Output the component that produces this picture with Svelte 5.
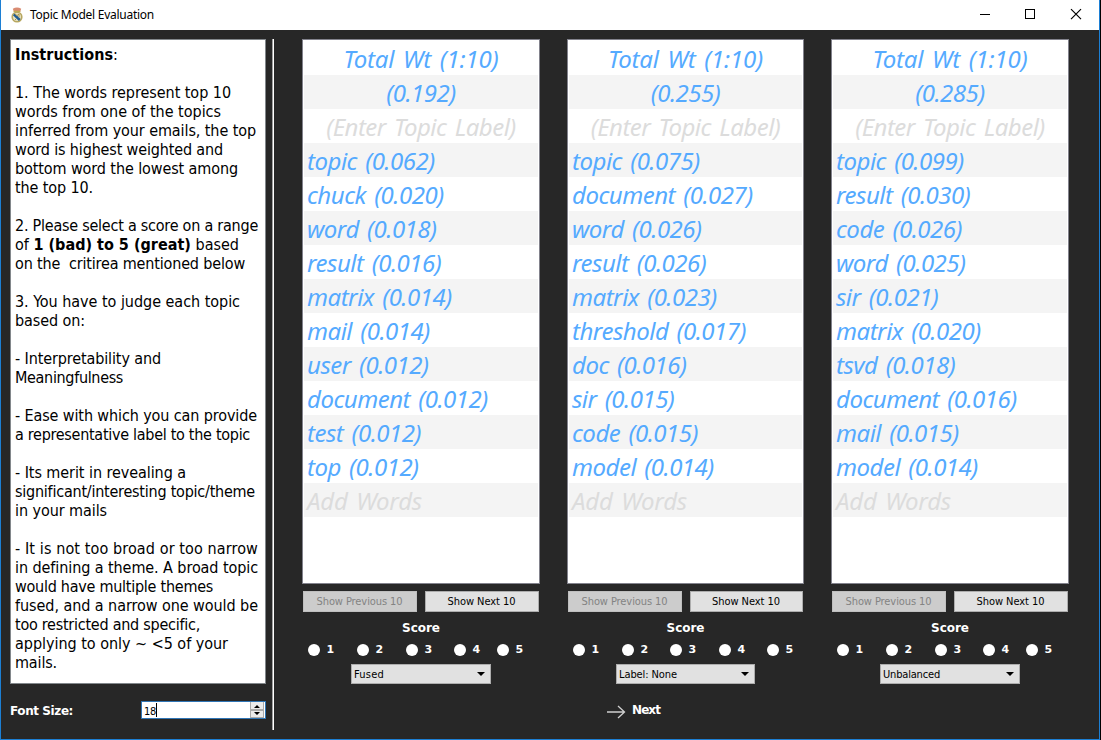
<script>
  // Spreads a line of text over the width it is given.
  function fit(node, width) {
    node.style.letterSpacing = '0px';
    const natural = node.getBoundingClientRect().width;
    const count = node.textContent.length;
    node.style.letterSpacing = `${(width - natural) / count}px`;
  }

  const instructions = [
    { bold: 'Instructions', text: ':', w: 103 },
    null,
    { text: '1. The words represent top 10', w: 216 },
    { text: 'words from one of the topics', w: 206 },
    { text: 'inferred from your emails, the top', w: 241 },
    { text: 'word is highest weighted and', w: 208 },
    { text: 'bottom word the lowest among', w: 223 },
    { text: 'the top 10.', w: 78 },
    null,
    { text: '2. Please select a score on a range', w: 243 },
    { pre: 'of ', bold: '1 (bad) to 5 (great)', text: ' based', w: 224 },
    { text: 'on the  critirea mentioned below', w: 230 },
    null,
    { text: '3. You have to judge each topic', w: 225 },
    { text: 'based on:', w: 70 },
    null,
    { text: '- Interpretability and', w: 146 },
    { text: 'Meaningfulness', w: 108 },
    null,
    { text: '- Ease with which you can provide', w: 242 },
    { text: 'a representative label to the topic', w: 235 },
    null,
    { text: '- Its merit in revealing a', w: 171 },
    { text: 'significant/interesting topic/theme', w: 240 },
    { text: 'in your mails', w: 92 },
    null,
    { text: '- It is not too broad or too narrow', w: 243 },
    { text: 'in defining a theme. A broad topic', w: 243 },
    { text: 'would have multiple themes', w: 198 },
    { text: 'fused, and a narrow one would be', w: 243 },
    { text: 'too restricted and specific,', w: 185 },
    { text: 'applying to only ~ <5 of your', w: 213 },
    { text: 'mails.', w: 42 }
  ];

  const topics = [
    {
      total: '0.192', label: 'Fused', labelWidth: 30, kind: 'wide',
      words: [['topic', '0.062'], ['chuck', '0.020'], ['word', '0.018'], ['result', '0.016'], ['matrix', '0.014'],
        ['mail', '0.014'], ['user', '0.012'], ['document', '0.012'], ['test', '0.012'], ['top', '0.012']]
    },
    {
      total: '0.255', label: 'Label: None', labelWidth: 58, kind: 'mid',
      words: [['topic', '0.075'], ['document', '0.027'], ['word', '0.026'], ['result', '0.026'], ['matrix', '0.023'],
        ['threshold', '0.017'], ['doc', '0.016'], ['sir', '0.015'], ['code', '0.015'], ['model', '0.014']]
    },
    {
      total: '0.285', label: 'Unbalanced', labelWidth: 57, kind: 'wide',
      words: [['topic', '0.099'], ['result', '0.030'], ['code', '0.026'], ['word', '0.025'], ['sir', '0.021'],
        ['matrix', '0.020'], ['tsvd', '0.018'], ['document', '0.016'], ['mail', '0.015'], ['model', '0.014']]
    }
  ];
</script>

<div class="window">
  <header>
    <svg class="crest" width="12" height="16" viewBox="0 0 12 16">
      <path d="M1.8 1.8Q6-.6 10.2 1.8L9 5H3Z" fill="#d98b72" />
      <path d="M2.6 4.4H9.4" stroke="#c2a94e" stroke-width="1.4" />
      <circle cx="6" cy="10" r="4.8" fill="#e9e3c0" stroke="#b7a760" stroke-width="1.6" />
      <path d="M2.8 7.4L8.8 13" stroke="#1f5c94" stroke-width="2.6" />
      <path d="M4 7L6 8.6L8 7V10.5M4 12L5 13" fill="none" stroke="#a8924a" stroke-width="1" />
    </svg>
    <span class="title"><span use:fit={124}>Topic Model Evaluation</span></span>
    <svg class="controls" width="110" height="30" viewBox="0 0 110 30" fill="none" stroke="#000">
      <path d="M0 14.5H10M45.5 9.5H54.5V18.5H45.5Z" shape-rendering="crispEdges" />
      <path d="M91 9.2L101 19.2M101 9.2L91 19.2" stroke-width="1.2" />
    </svg>
  </header>

  <main>
    <aside>
      <div class="instructions">
        {#each instructions as line}
          <div class="line">{#if line}<span use:fit={line.w}>{line.pre ?? ''}{#if line.bold}<b>{line.bold}</b>{/if}{line.text}</span>{/if}</div>
        {/each}
      </div>
      <div class="size">
        <span class="strong"><span use:fit={63}>Font Size:</span></span>
        <div class="spin">
          <span class="value"><span use:fit={12}>18</span></span>
          <svg width="14" height="16" viewBox="0 0 14 16">
            <rect width="14" height="16" fill="#ababab" />
            <path d="M1 0H13V7H1ZM1 9H13V15H1Z" fill="#ececec" />
            <path d="M4 6H10L7 3ZM4 10H10L7 13Z" fill="#000" />
          </svg>
        </div>
      </div>
    </aside>

    <div class="divider"></div>

    <section class="content">
      <div class="topics">
        {#each topics as topic}
          <article class={topic.kind}>
            <ul>
              <li class="center"><span use:fit={155}>Total Wt (1:10)</span></li>
              <li class="center">({topic.total})</li>
              <li class="center hint">(Enter Topic Label)</li>
              {#each topic.words as [word, weight]}
                <li>{word} ({weight})</li>
              {/each}
              <li class="hint"><span use:fit={115}>Add Words</span></li>
            </ul>
            <div class="buttons">
              <button disabled><span use:fit={86}>Show Previous 10</span></button>
              <button><span use:fit={68}>Show Next 10</span></button>
            </div>
            <div class="score strong"><span use:fit={38}>Score</span></div>
            <div class="radios strong">
              {#each [1, 2, 3, 4, 5] as n}
                <div class="radio"><i></i>{n}</div>
              {/each}
            </div>
            <div class="select">
              <span use:fit={topic.labelWidth}>{topic.label}</span>
              <svg width="8" height="4" viewBox="0 0 8 4"><path d="M0 0H8L4 4Z" /></svg>
            </div>
          </article>
        {/each}
      </div>
      <div class="next">
        <svg width="19" height="14" viewBox="0 0 19 14" fill="none" stroke="#d0d0d0" stroke-width="1.3">
          <path d="M0 7H17.5M11 1L17.5 7L11 13" />
        </svg>
        <span class="strong"><span use:fit={28}>Next</span></span>
      </div>
    </section>
  </main>
</div>

<style>
  :global(body) { margin: 0; background: #000; }
  .window {
    box-sizing: border-box;
    width: 1100px;
    height: 740px;
    border: solid #1c7fd4;
    border-width: 0 1px 1px;
    background: #272727;
    display: flex;
    flex-direction: column;
    font-family: "DejaVu Sans Condensed", "DejaVu Sans", sans-serif;
    font-stretch: condensed;
    white-space: nowrap;
    overflow: hidden;
  }
  header {
    height: 30px;
    flex: none;
    display: flex;
    align-items: center;
    background: #fff;
    padding-left: 10px;
  }
  .title {
    font: 12px/30px "Noto Sans", sans-serif;
    margin-left: 7px;
    flex: 1;
  }
  .controls { margin-right: 9px; }
  main { flex: 1; display: flex; padding: 9px 0 0 9px; }
  aside { width: 256px; flex: none; }
  .instructions {
    box-sizing: border-box;
    height: 645px;
    background: #fff;
    border: 1px solid #82878b;
    padding: 5px 0 0 4px;
    font-size: 16px;
  }
  .line { height: 19px; line-height: 19px; white-space: pre; }
  .size {
    margin-top: 17px;
    height: 18px;
    display: flex;
    justify-content: space-between;
    align-items: center;
  }
  .strong {
    font: bold 12px/18px "DejaVu Sans", sans-serif;
    color: #fff;
  }
  .size .strong { padding-top: 1px; }
  .spin {
    box-sizing: border-box;
    width: 125px;
    height: 18px;
    border: 1px solid #2f75b5;
    background: #fff;
    display: flex;
    justify-content: space-between;
    font-size: 11px;
    line-height: 17px;
  }
  .value { margin: 1px 0 1px 2px; height: 14px; border-right: 1px solid #000; }
  .spin svg { margin-right: 1px; }
  .divider {
    box-sizing: border-box;
    width: 2px;
    height: 691px;
    margin-left: 6px;
    background: #fff;
    border-left: 1px solid #a0a0a0;
  }
  .content { margin-left: 28px; }
  .topics { display: flex; gap: 27px; }
  article { width: 238px; }
  article.mid { width: 237px; }
  ul {
    box-sizing: border-box;
    height: 545px;
    margin: 0;
    padding: 1px;
    list-style: none;
    background: #fff;
    border: 1px solid #82828c;
    font: italic 24px/36px "Noto Sans", sans-serif;
    letter-spacing: -0.5px;
    word-spacing: 2.5px;
    color: #55aaff;
  }
  li { height: 34px; padding-left: 3px; }
  li:nth-child(even) { background: #f4f4f4; }
  li.center { text-align: center; padding-left: 0; }
  li.hint { color: #dcdcdc; }
  .buttons { display: flex; justify-content: space-between; margin: 7px 1px 0; }
  button {
    box-sizing: border-box;
    width: 114px;
    height: 21px;
    padding: 1px 1px 0 0;
    border: 1px solid #adadad;
    background: #e1e1e1;
    font: 11px/18px "DejaVu Sans Condensed", "DejaVu Sans", sans-serif;
    font-stretch: condensed;
    color: #000;
  }
  .mid button:last-child { width: 113px; }
  button:disabled { background: #ccc; border-color: #bfbfbf; color: #838383; }
  .score { margin-top: 7px; height: 18px; text-align: center; }
  .radios {
    display: grid;
    grid-template-columns: 49px 49px 48px 43px 30px;
    margin: 4px 0 0 6px;
    height: 18px;
    font-size: 11px;
  }
  .mid .radios { grid-template-columns: 49px 48px 49px 48px 30px; }
  .radio { display: flex; align-items: center; gap: 6.5px; }
  .radio i { width: 12px; height: 12px; border-radius: 50%; background: #fff; }
  .select {
    box-sizing: border-box;
    width: 140px;
    height: 20px;
    margin: 5px auto 0;
    padding: 1px 5px 0 2px;
    border: 1px solid #adadad;
    background: #e1e1e1;
    display: flex;
    justify-content: space-between;
    align-items: center;
    font-size: 11px;
  }
  .select svg { margin-top: -1px; }
  .mid .select { width: 139px; }
  .next {
    display: flex;
    align-items: center;
    gap: 6px;
    margin: 17px 0 0 305px;
  }
  .next svg { margin-top: 4px; }
</style>
